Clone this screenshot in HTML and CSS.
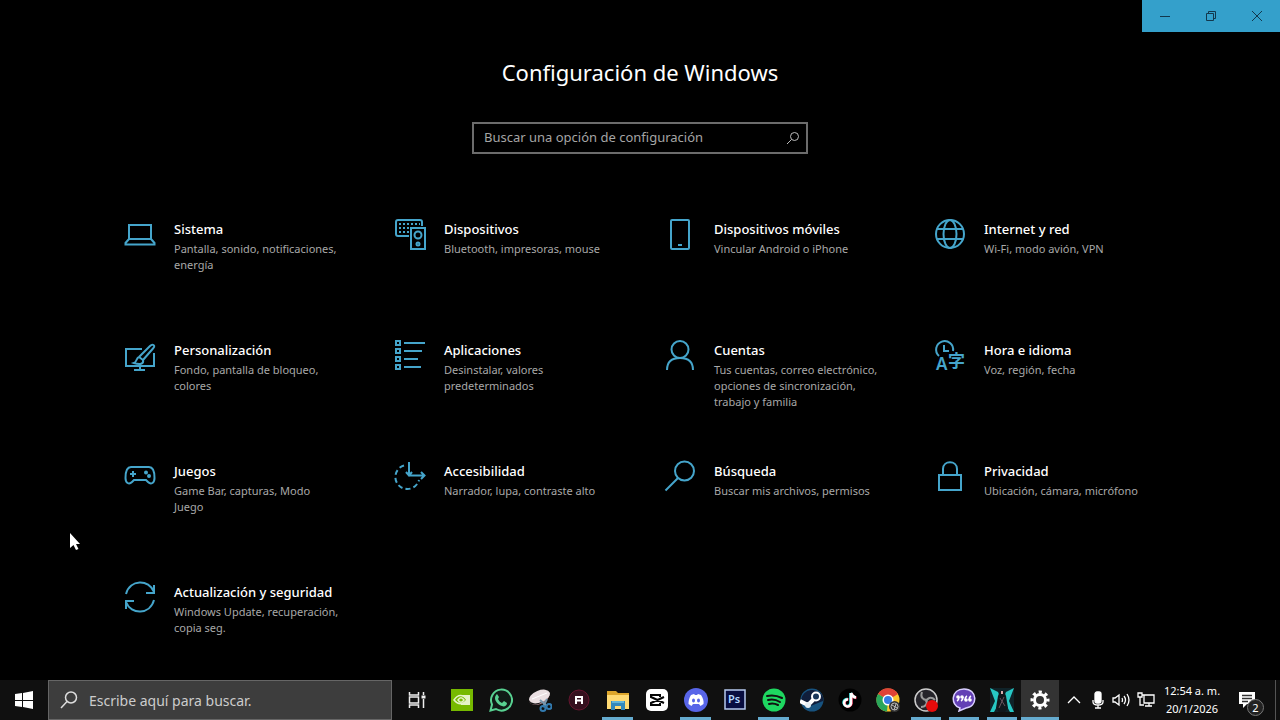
FILE: index.html
```html
<!DOCTYPE html>
<html lang="es">

<head>
    <meta charset="UTF-8">
    <meta name="viewport" content="width=device-width, initial-scale=1.0">
    <title>Configuración</title>
    <link rel="stylesheet" href="styles.css">
</head>

<body>
    <header class="titlebar">
        <button type="button" aria-label="Minimizar"><svg width="12" height="12" viewBox="0 0 12 12"><path d="M1 6.500h10"/></svg></button>
        <button type="button" aria-label="Restaurar"><svg width="12" height="12" viewBox="0 0 12 12"><path d="M1.500 3.500h7v7h-7zM3.500 3.500v-2h7v7h-2"/></svg></button>
        <button type="button" aria-label="Cerrar"><svg width="12" height="12" viewBox="0 0 12 12"><path d="M1 1l10 10M11 1L1 11"/></svg></button>
    </header>

    <main class="settings">
        <h1>Configuración de Windows</h1>
        <form class="search">
            <input type="text" aria-label="Buscar una opción de configuración" placeholder="Buscar una opción de configuración">
            <button type="button" aria-label="Buscar"><svg width="14" height="14" viewBox="0 0 14 14"><circle cx="8.500" cy="5.500" r="4"/><path d="M5.500 8.500L1 13"/></svg></button>
        </form>

        <nav class="tiles">
            <a class="tile" href="#sistema">
                <svg class="icon" viewBox="0 0 32 32"><path d="M5 6h22v14H5zM5 20l-3.500 4v1.500h29V24L27 20"/></svg>
                <div><h2>Sistema</h2><p>Pantalla, sonido, notificaciones, energía</p></div>
            </a>
            <a class="tile" href="#dispositivos">
                <svg class="icon" viewBox="0 0 32 32"><path d="M15 17H4q-2 0-2-2V3q0-2 2-2h22q2 0 2 2v4"/><path d="M5 5h21M5 9h12M5 13h10" stroke-dasharray="2 2"/><path d="M17 9h14v21H17z"/><circle cx="24" cy="16" r="3.500"/><circle cx="24" cy="25" r="1.500"/><path d="M24 12v1"/></svg>
                <div><h2>Dispositivos</h2><p>Bluetooth, impresoras, mouse</p></div>
            </a>
            <a class="tile" href="#moviles">
                <svg class="icon" viewBox="0 0 32 32"><rect x="7" y="1" width="18" height="29" rx="1"/><path d="M14 26h4"/></svg>
                <div><h2>Dispositivos móviles</h2><p>Vincular Android o iPhone</p></div>
            </a>
            <a class="tile" href="#red">
                <svg class="icon" viewBox="0 0 32 32"><circle cx="16" cy="15" r="14"/><ellipse cx="16" cy="15" rx="6.500" ry="14"/><path d="M3 10h26M3 20h26"/></svg>
                <div><h2>Internet y red</h2><p>Wi-Fi, modo avión, VPN</p></div>
            </a>
            <a class="tile" href="#personalizacion">
                <svg class="icon" viewBox="0 0 32 32"><path d="M18 9H2v17h28V13M16 26v3M10 30h11"/><path d="M15 17L26 6c1-1 2-2 3.500-1s.5 2.500-.5 3.500L19 20M15 17l4 3c1 4-3 5-9 3 3-1 2-5 5-6z"/></svg>
                <div><h2>Personalización</h2><p>Fondo, pantalla de bloqueo, colores</p></div>
            </a>
            <a class="tile" href="#aplicaciones">
                <svg class="icon" viewBox="0 0 32 32"><path d="M2 1h4v4H2zM2 9h4v4H2zM2 17h4v4H2zM2 25h4v4H2zM10 3h21M10 11h18M10 19h14M10 27h17"/></svg>
                <div><h2>Aplicaciones</h2><p>Desinstalar, valores predeterminados</p></div>
            </a>
            <a class="tile" href="#cuentas">
                <svg class="icon" viewBox="0 0 32 32"><circle cx="16" cy="9.500" r="8.500"/><path d="M3 30c0-8 5-12 13-12s13 4 13 12"/></svg>
                <div><h2>Cuentas</h2><p>Tus cuentas, correo electrónico, opciones de sincronización, trabajo y familia</p></div>
            </a>
            <a class="tile" href="#idioma">
                <svg class="icon" viewBox="0 0 32 32"><path d="M5 16a8.500 8.500 0 1 1 14-5M10 5v6h5"/><text x="2" y="30" font-size="17" font-weight="600">A</text><text class="cjk" x="14" y="27" font-size="17">字</text></svg>
                <div><h2>Hora e idioma</h2><p>Voz, región, fecha</p></div>
            </a>
            <a class="tile" href="#juegos">
                <svg class="icon" viewBox="0 0 32 32"><path d="M7 6h18c4 0 5.500 5 5.500 11 0 5-3.500 7-6.500 4l-2-2H10l-2 2c-3 3-6.500 1-6.500-4C1.500 11 3 6 7 6zM9 10v6M6 13h6"/><circle cx="22" cy="11.500" r="1"/><circle cx="25" cy="15" r="1"/></svg>
                <div><h2>Juegos</h2><p>Game Bar, capturas, Modo Juego</p></div>
            </a>
            <a class="tile" href="#accesibilidad">
                <svg class="icon" viewBox="0 0 32 32"><path d="M15 1v13M12 11l3 3.500L18 11M15 14.500h15M27 11l3.500 3.500L27 18"/><path d="M10 4.500A12 12 0 1 0 25 19" stroke-dasharray="5 3"/></svg>
                <div><h2>Accesibilidad</h2><p>Narrador, lupa, contraste alto</p></div>
            </a>
            <a class="tile" href="#busqueda">
                <svg class="icon" viewBox="0 0 32 32"><circle cx="20.500" cy="10" r="9.500"/><path d="M14 17L1.500 29.500"/></svg>
                <div><h2>Búsqueda</h2><p>Buscar mis archivos, permisos</p></div>
            </a>
            <a class="tile" href="#privacidad">
                <svg class="icon" viewBox="0 0 32 32"><path d="M5 14h22v15H5zM9 14V8c0-9 14-9 14 0v6"/></svg>
                <div><h2>Privacidad</h2><p>Ubicación, cámara, micrófono</p></div>
            </a>
            <a class="tile" href="#actualizacion">
                <svg class="icon" viewBox="0 0 32 32"><path d="M2 12C6-3 25-3 30 10M30 3v8h-8M30 18C26 33 7 33 2 20M2 27v-8h8"/></svg>
                <div><h2>Actualización y seguridad</h2><p>Windows Update, recuperación, copia seg.</p></div>
            </a>
        </nav>
    </main>

    <footer class="taskbar">
        <button type="button" class="start" aria-label="Inicio"><svg width="18" height="18" viewBox="0 0 18 18"><path fill="#fff" d="M0 3l7-1v7H0zM8 2l10-2v9H8zM0 10h7v6l-7-1zM8 10h10v8L8 16z"/></svg></button>
        <label class="task-search">
            <svg width="20" height="20" viewBox="0 0 20 20"><circle cx="12" cy="7.500" r="5.500"/><path d="M8 11.500L2 18"/></svg>
            <input type="text" aria-label="Buscar en Windows" placeholder="Escribe aquí para buscar.">
        </label>
        <button type="button" class="task-view" aria-label="Vista de tareas"><svg width="18" height="18" viewBox="0 0 18 18" fill="none" stroke="#eee" stroke-width="1.500"><path d="M1.500 1v3h9V1M1.500 6h9v6h-9zM1.500 17v-3h9v3M15.500 1v3M15.500 8v9"/><path d="M13.500 6h4" stroke-width="3"/></svg></button>

        <div class="apps">
            <button type="button" aria-label="NVIDIA"><svg viewBox="0 0 24 24"><path fill="#76b900" d="M1 1h22v22H1z"/><path fill="#e5f3c8" d="M11 7h9v10h-9z"/><path d="M4 12c4-6 9-6 13 0-4 5-9 5-13 0z" fill="#76b900" stroke="#e5f3c8" stroke-width="1.500"/><path d="M8 12c2-3 4-3 6 0-2 3-4 3-6 0z" fill="none" stroke="#e5f3c8" stroke-width="1.500"/></svg></button>
            <button type="button" aria-label="WhatsApp"><svg viewBox="0 0 24 24"><path d="M1.500 22.500l1.500-6a10.500 10.500 0 1 1 4 4.500z" fill="#101b16" stroke="#58d191" stroke-width="2"/><path fill="#58d191" d="M8 6l2 3-1 2c1 2 2 3 4 4l2-2 3 2c0 3-3 4-5 3-4-1-7-5-7-8 0-2 1-3 2-4z"/></svg></button>
            <button type="button" aria-label="Recortes"><svg viewBox="0 0 24 24"><path d="M1 11c0 7 8 7 13 3l8-8V4c0 8-9 14-16 13-4-1-5-3-5-6z" fill="#b88d98"/><ellipse cx="11.500" cy="8.500" rx="11" ry="6" transform="rotate(-22 11.500 8.500)" fill="#eadfe2"/><path d="M4 11L19 5" stroke="#fff"/><path d="M12 12l7 6M19 11l-4 8" stroke="#7796ad" stroke-width="2"/><circle cx="15" cy="20.500" r="2.500" fill="none" stroke="#327aaf" stroke-width="2"/><circle cx="21" cy="18.500" r="2.500" fill="none" stroke="#327aaf" stroke-width="2"/></svg></button>
            <button type="button" aria-label="Aplicación A"><svg viewBox="0 0 24 24"><circle cx="12" cy="12" r="10" fill="#35101e" stroke="#64152e"/><path d="M9 16V9h6v7M9 12.500h6" fill="none" stroke="#fff" stroke-width="2"/></svg></button>
            <button type="button" class="open" aria-label="Explorador de archivos"><svg viewBox="0 0 24 24"><path fill="#dda62c" d="M1 3h9l2 2h11v16H1z"/><path fill="#ffda73" d="M1 7h22v14H1z"/><path fill="#3388bb" d="M5 13h14v9h-4v-4H9v4H5z"/><path fill="#62b6d9" d="M6 13h12v2H6z"/></svg></button>
            <button type="button" aria-label="CapCut"><svg viewBox="0 0 24 24"><rect x="1" y="1" width="22" height="22" rx="5" fill="#fff"/><path d="M15 9V7H6v2l13 6M15 15v2H6v-2l13-6" fill="none" stroke="#050505" stroke-width="2"/></svg></button>
            <button type="button" class="open" aria-label="Discord"><svg viewBox="0 0 24 24"><circle cx="12" cy="12" r="12" fill="#5865e8"/><path fill="#fff" d="M7 7l3-1 1 1h2l1-1 3 1c2 3 3 6 2.500 9l-3 2-1.500-2h-6l-1.500 2-3-2C4.500 13 5 10 7 7z"/><ellipse cx="9.500" cy="12.500" rx="1.500" ry="2" fill="#5865e8"/><ellipse cx="14.500" cy="12.500" rx="1.500" ry="2" fill="#5865e8"/></svg></button>
            <button type="button" aria-label="Photoshop"><svg viewBox="0 0 24 24"><path d="M2 2h20v19H2z" fill="#080d40" stroke="#b5c9ee" stroke-width="1.500"/><text x="5" y="15" font-size="11" font-weight="600" fill="#b5d9ff">Ps</text></svg></button>
            <button type="button" class="open" aria-label="Spotify"><svg viewBox="0 0 24 24"><circle cx="12" cy="12" r="11.500" fill="#1ed760"/><path d="M5 8c5-1 10-.5 15 2M6 12c4-1 8-.5 12 2M7 16c3-1 6-.5 9 1" fill="none" stroke="#111" stroke-width="2" stroke-linecap="round"/></svg></button>
            <button type="button" aria-label="Steam"><svg viewBox="0 0 24 24"><circle cx="12" cy="12" r="11.500" fill="#17527e"/><path fill="#101e3b" d="M1 12a11.500 11.500 0 0 1 22-3v4L8 19z"/><path d="M0 13l8 4 8-8" fill="none" stroke="#fff" stroke-width="4"/><circle cx="16" cy="8.500" r="4" fill="#19365a" stroke="#fff" stroke-width="2"/><circle cx="8" cy="17" r="3" fill="#e5edf2"/></svg></button>
            <button type="button" aria-label="TikTok"><svg viewBox="0 0 24 24"><circle cx="12" cy="12" r="11.500" fill="#000"/><g fill="none" stroke-width="2.500"><path d="M12.500 5v10a3.500 3.500 0 1 1-3-4M12.500 5c1 3 2 4 5 4.500" stroke="#25f4ee"/><path d="M13.500 5.500v10a3.500 3.500 0 1 1-3-4M13.500 5.500c1 3 2 4 5 4.500" stroke="#fe2c55"/><path d="M13 5v10.500a3.500 3.500 0 1 1-3-4M13 5c1 3 2 4 5 4.500" stroke="#fff"/></g></svg></button>
            <button type="button" aria-label="Chrome"><svg viewBox="0 0 24 24"><circle cx="12" cy="12" r="11.500" fill="#fbc72d"/><path fill="#df4337" d="M12 12L2 6a11.500 11.500 0 0 1 20 0z"/><path fill="#29a65a" d="M12 12L2 6a11.500 11.500 0 0 0 9 17.500z"/><circle cx="12" cy="12" r="5.500" fill="#fff"/><circle cx="12" cy="12" r="4" fill="#347ce6"/><circle cx="18.500" cy="18.500" r="5.500" fill="#333"/><circle cx="18.500" cy="18.500" r="3.500" fill="none" stroke="#bbb"/><path d="M16 17l5 3M18 22l2-6" stroke="#bbb"/></svg></button>
            <button type="button" class="open" aria-label="OBS Studio"><svg viewBox="0 0 24 24"><circle cx="12" cy="12" r="11" fill="#25242a" stroke="#ccc" stroke-width="1.500"/><path d="M8 4c-2 5 1 8 5 8M21 12c-4-4-8-2-9 2M7 19c5 0 7-4 5-8" fill="none" stroke="#999" stroke-width="2"/><circle cx="18" cy="18" r="6" fill="#e60b0b"/></svg></button>
            <button type="button" class="open" aria-label="Chat"><svg viewBox="0 0 24 24"><path d="M7 23l1-3C-2 17-1 1 12 1c14 0 14 18 2 19z" fill="#6340b5" stroke="#d9cfff" stroke-width="1.500"/><g fill="#fff"><circle cx="6" cy="9" r="1.800"/><circle cx="10" cy="9" r="1.800"/><circle cx="14" cy="12" r="1.800"/><circle cx="18" cy="12" r="1.800"/></g><path d="M7 9q0 3-2 4M11 9q0 3-2 4M13 12q0-3 2-4M17 12q0-3 2-4" fill="none" stroke="#fff" stroke-width="1.500"/></svg></button>
            <button type="button" class="open" aria-label="Juego"><svg viewBox="0 0 24 24"><path fill="#102329" d="M0 0h24v24H0z"/><path fill="#27c8c5" d="M0 0l8 4 3 7-7 13H0l5-11zM24 0l-8 4-3 7 7 13h4l-5-11z"/><path fill="#11171c" d="M10 3h4l2 5 2 12-3 4H9l-3-4 2-12z"/><path d="M12 3v3M10 10l5 8M14 9l-5 11" stroke="#69535d"/><path fill="#d8adac" d="M11 3h2v3h-2z"/></svg></button>
            <button type="button" class="open active" aria-label="Configuración"><svg viewBox="0 0 24 24" fill="none" stroke="#fff"><circle cx="12" cy="12" r="5.500" stroke-width="3"/><circle cx="12" cy="12" r="8" stroke-width="3" stroke-dasharray="3.142 3.142" stroke-dashoffset="1.571"/></svg></button>
        </div>

        <div class="tray">
            <button type="button" class="caret" aria-label="Mostrar iconos ocultos"><svg width="14" height="8" viewBox="0 0 14 8"><path d="M1 7l6-6 6 6"/></svg></button>
            <button type="button" class="mic" aria-label="Micrófono"><svg width="14" height="18" viewBox="0 0 14 18"><rect x="4" y="1" width="6" height="11" rx="2" fill="#fff"/><path d="M2 9v2c0 4 10 4 10 0V9M7 14v3M4 17h6"/></svg></button>
            <button type="button" class="volume" aria-label="Volumen"><svg width="18" height="16" viewBox="0 0 18 16"><path d="M1 6v4h2l4 3V3L3 6zM10 6q1 2 0 4M12 4q3 4 0 8M15 2q4 6 0 12"/></svg></button>
            <button type="button" class="network" aria-label="Red"><svg width="18" height="18" viewBox="0 0 18 18"><path d="M1 2h4v4H1zM3 6v8h4M5 4h12v8H7V4M12 12v3M8 15h7"/></svg></button>
            <time class="clock" datetime="2026-01-20T00:54"><span>12:54 a. m.</span><span>20/1/2026</span></time>
            <button type="button" class="notices" aria-label="Notificaciones"><svg width="18" height="18" viewBox="0 0 18 18"><path fill="#fff" stroke="none" d="M1 1h16v12H9l-4 4v-4H1z"/><path d="M4 4.500h10M4 7.500h10M4 10.500h6" stroke="#333"/></svg><span class="badge">2</span></button>
            <button type="button" class="desktop" aria-label="Mostrar escritorio"></button>
        </div>
    </footer>

    <svg class="pointer" width="12" height="19" viewBox="0 0 12 19"><path fill="#fff" d="M1 1v15l3.500-3 2.500 5 2.500-1L7 12h4z"/></svg>
</body>

</html>
```
FILE: styles.css
```css
* {
    box-sizing: border-box;
}

body {
    display: flex;
    flex-direction: column;
    min-height: 100vh;
    margin: 0;
    background: #000;
    color: #fff;
    font-family: "Segoe UI", "Noto Sans", sans-serif;
}

button {
    display: flex;
    align-items: center;
    justify-content: center;
    padding: 0;
    border: 0;
    background: none;
    color: inherit;
    font: inherit;
}

input {
    min-width: 0;
    border: 0;
    outline: 0;
    background: none;
    color: #fff;
    font: inherit;
}

/* window buttons */
.titlebar {
    display: flex;
    justify-content: flex-end;
    height: 32px;
}

.titlebar button {
    width: 46px;
    background: #34a0cb;
}

.titlebar svg {
    fill: none;
    stroke: #12384d;
}

/* settings home */
.settings {
    display: flex;
    flex: 1;
    flex-direction: column;
    align-items: center;
    padding-top: 24px;
}

h1 {
    margin: 0 0 34px;
    font-size: 22px;
    font-weight: 400;
    line-height: 32px;
}

.search {
    display: flex;
    width: 336px;
    height: 32px;
    border: 2px solid #6c6c6c;
}

.search input {
    flex: 1;
    padding: 0 10px 2px;
    font-size: 13px;
}

.search input::placeholder {
    color: #a5a5a5;
    opacity: 1;
}

.search button {
    width: 26px;
}

.search svg {
    fill: none;
    stroke: #bbb;
}

.tiles {
    display: grid;
    grid-template-columns: repeat(auto-fill, 270px);
    grid-auto-rows: minmax(121px, auto);
    justify-content: center;
    align-self: stretch;
    padding: 65px 100px 0;
    margin-bottom: -24px;
}

.tile {
    display: flex;
    gap: 18px;
    padding: 0 30px 0 24px;
    color: #fff;
    text-decoration: none;
}

.icon {
    flex: none;
    width: 32px;
    height: 32px;
    overflow: visible;
    fill: none;
    stroke: #45a5cb;
    stroke-width: 2;
}

.icon text {
    fill: #45a5cb;
    stroke: none;
}

.icon .cjk {
    font-family: "Noto Sans CJK JP", sans-serif;
    font-weight: 700;
}

.tile h2 {
    margin: 0 0 2px;
    font-size: 13px;
    font-weight: 500;
    line-height: 20px;
    white-space: nowrap;
}

.tile p {
    margin: 0;
    color: #a8a8a8;
    font-size: 11px;
    line-height: 16px;
}

/* taskbar */
.taskbar {
    display: flex;
    height: 40px;
    background: #101010;
}

.start {
    width: 48px;
}

.task-search {
    display: flex;
    align-items: center;
    gap: 8px;
    width: 344px;
    padding-left: 10px;
    border: 1px solid #666;
    background: #3d3d3d;
}

.task-search svg {
    fill: none;
    stroke: #ddd;
    stroke-width: 1.5;
}

.task-search input {
    flex: 1;
    font-size: 14px;
}

.task-search input::placeholder {
    color: #ccc;
    opacity: 1;
}

.task-view {
    width: 50px;
}

.apps {
    display: flex;
    flex: 1;
    min-width: 0;
}

.apps button {
    position: relative;
    flex: 0 1 39px;
}

.apps button:nth-child(n+10) {
    flex-basis: 38px;
}

.apps svg {
    width: 24px;
    height: 24px;
}

.open::after {
    position: absolute;
    right: 4px;
    bottom: 0;
    left: 4px;
    height: 3px;
    background: #65abcf;
    content: "";
}

.apps .active {
    background: #333;
}

.active::after {
    right: 0;
    left: 0;
}

.tray {
    display: flex;
}

.tray svg {
    fill: none;
    stroke: #fff;
    stroke-width: 1.3;
}

.caret {
    width: 28px;
}

.mic {
    width: 20px;
}

.volume {
    width: 26px;
}

.network {
    width: 24px;
}

.clock {
    display: flex;
    flex-direction: column;
    align-items: center;
    width: 68px;
    padding-top: 2px;
    font-size: 11px;
    line-height: 18px;
    white-space: nowrap;
}

.notices {
    position: relative;
    justify-content: flex-start;
    width: 49px;
    padding-left: 12px;
}

.badge {
    position: absolute;
    right: 11px;
    bottom: 4px;
    width: 17px;
    height: 17px;
    border: 1px solid #777;
    border-radius: 50%;
    background: #222;
    font-size: 11px;
    line-height: 15px;
}

.desktop {
    width: 5px;
    border-left: 1px solid #555;
}

/* mouse pointer over the page */
.pointer {
    position: absolute;
    top: 532px;
    left: 69px;
}
```
